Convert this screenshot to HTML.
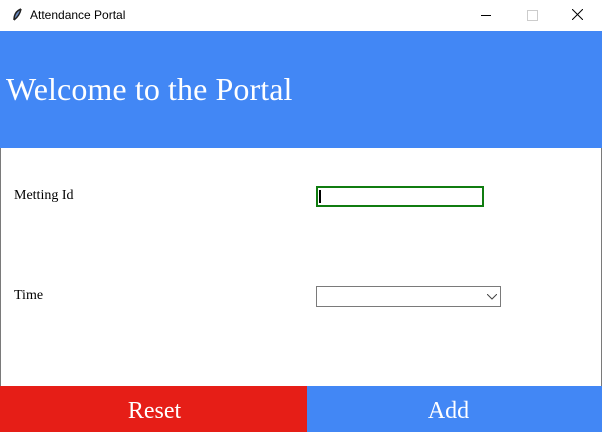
<html><body style="margin:0;width:602px;height:432px;overflow:hidden;position:relative;background:#fff;font-family:'Liberation Serif',serif">
<div style="position:absolute;left:0;top:0;width:600px;height:431px;border:1px solid #7a7a7a;border-top:none"></div>
<div style="position:absolute;left:0;top:0;width:602px;height:31px;background:#fff;font-family:'Liberation Sans',sans-serif;font-size:12px">
<svg style="position:absolute;left:12px;top:8px" width="10" height="14"><path d="M9 1 C4 3 2 7 2 12 M9 1 C8 6 6 9 2 12" stroke="#222" stroke-width="1.5" fill="#6a8ac0"/></svg>
<span style="position:absolute;left:30px;top:8px">Attendance Portal</span>
<div style="position:absolute;left:481px;top:15px;width:10px;height:1px;background:#000"></div>
<div style="position:absolute;left:527px;top:10px;width:9px;height:9px;border:1px solid #ccc"></div>
<svg style="position:absolute;left:572px;top:9px" width="11" height="11"><path d="M0 0L11 11M11 0L0 11" stroke="#000"/></svg>
</div>
<div style="position:absolute;left:0;top:31px;width:602px;height:117px;background:#4287f5"></div>
<div style="position:absolute;left:6px;top:71px;font-size:32px;color:#fff;letter-spacing:0.1px">Welcome to the Portal</div>
<div style="position:absolute;left:14px;top:188px;font-size:14px">Metting Id</div>
<div style="position:absolute;left:14px;top:288px;font-size:14px">Time</div>
<div style="position:absolute;left:316px;top:186px;width:164px;height:17px;border:2px solid #107c10"><div style="position:absolute;left:1px;top:2px;width:2px;height:13px;background:#000"></div></div>
<div style="position:absolute;left:316px;top:286px;width:183px;height:19px;border:1px solid #7a7a7a"><svg style="position:absolute;left:170px;top:7px" width="10" height="6"><path d="M0 0L5 5L10 0" stroke="#444" fill="none"/></svg></div>
<div style="position:absolute;left:0;top:386px;width:307px;height:46px;background:#e61e17"></div>
<div style="position:absolute;left:0;top:386px;width:309px;color:#fff;font-size:24px;text-align:center;line-height:50px">Reset</div>
<div style="position:absolute;left:307px;top:386px;width:295px;height:46px;background:#4287f5"></div>
<div style="position:absolute;left:307px;top:386px;width:283px;color:#fff;font-size:24px;text-align:center;line-height:50px">Add</div>
</body></html>
